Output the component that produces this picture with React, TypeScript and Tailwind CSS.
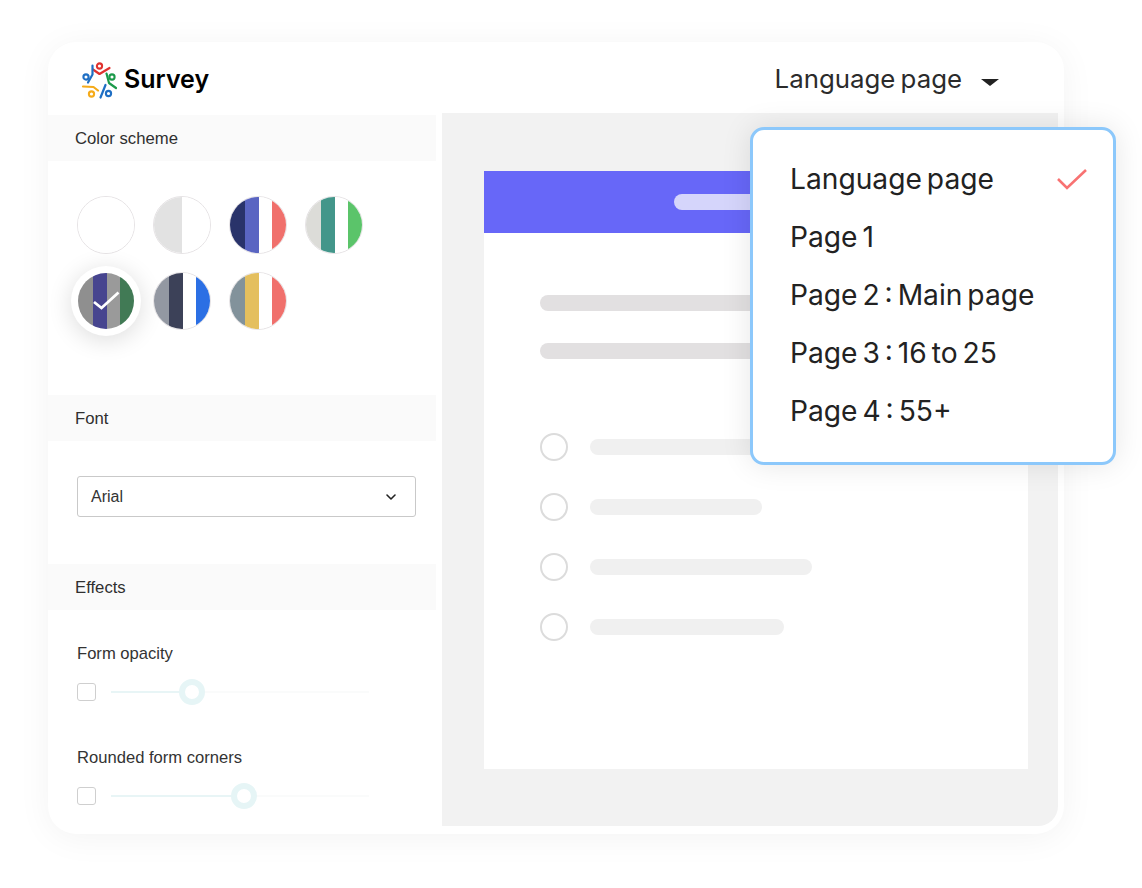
import React from 'react';
import { ChevronDown } from 'lucide-react';

const swatches: string[][] = [
  ['#ffffff'],
  ['#e2e2e2', '#ffffff'],
  ['#29336a', '#5a65c2', '#ffffff', '#f0706c'],
  ['#dcdcd8', '#43968a', '#ffffff', '#5bc46a'],
  ['#8f8f8f', '#47458f', '#9a9a9a', '#417a55'],
  ['#9398a2', '#3c4158', '#ffffff', '#2b6fe4'],
  ['#82929b', '#e4bf5e', '#ffffff', '#f0706c'],
];

const pages = ['Language page', 'Page 1', 'Page 2 : Main page', 'Page 3 : 16 to 25', 'Page 4 : 55+'];

const SurveyLogo = () => (
  <svg width="38" height="38" viewBox="0 0 38 38" fill="none" strokeLinecap="round" strokeLinejoin="round">
    <circle cx="19.5" cy="5" r="2.6" stroke="#e0322f" strokeWidth="2.1" />
    <path d="M13 8.5 L19.5 13 L29.5 7" stroke="#e0322f" strokeWidth="2.2" />
    <circle cx="6" cy="16" r="2.6" stroke="#1f6fc4" strokeWidth="2.1" />
    <path d="M12.5 4.5 L12.5 13.5 L8 21.5" stroke="#1f6fc4" strokeWidth="2.2" />
    <circle cx="32" cy="16" r="2.6" stroke="#1c9a4a" strokeWidth="2.1" />
    <path d="M26.5 12.5 L29 22 L36 27" stroke="#1c9a4a" strokeWidth="2.2" />
    <circle cx="11.5" cy="33" r="2.6" stroke="#f5ab1b" strokeWidth="2.1" />
    <path d="M3 25.5 L13.5 26 L18 29.5" stroke="#f5ab1b" strokeWidth="2.2" />
    <circle cx="28.5" cy="32.5" r="2.6" stroke="#1f6fc4" strokeWidth="2.1" />
    <path d="M25.5 24 L20.5 36.5" stroke="#1f6fc4" strokeWidth="2.2" />
  </svg>
);

const Swatch = ({ colors, selected }: { colors: string[]; selected?: boolean }) => (
  <div
    className={
      selected
        ? 'relative -m-[6px] h-[70px] w-[70px] rounded-full bg-white p-[7px] shadow-[0_4px_24px_rgba(0,0,0,0.14)]'
        : 'relative h-[58px] w-[58px] rounded-full'
    }
  >
    <div className={`flex h-full w-full overflow-hidden rounded-full ${selected ? '' : 'border border-[#e6e3e5]'}`}>
      {colors.map((c, i) => (
        <div key={i} className={`h-full ${i === 0 && colors.length === 4 ? 'flex-[1.12]' : 'flex-1'}`} style={{ backgroundColor: c }} />
      ))}
    </div>
    {selected && (
      <svg className="absolute left-[22px] top-[25px]" width="27" height="19" viewBox="0 0 27 19" fill="none">
        <path d="M1 11 L8.5 17 L25.5 1.5" stroke="#ffffff" strokeWidth="2.8" />
      </svg>
    )}
  </div>
);

const SectionBar = ({ title }: { title: string }) => (
  <div className="flex h-[46px] items-center bg-[#fafafa] pl-[27px] pt-[2px] text-[16.7px] text-[#2f2f2f]">{title}</div>
);

const SliderRow = ({ label, fill, knob }: { label: string; fill: string; knob: string }) => (
  <div>
    <div className="text-[16.6px] leading-[18px] text-[#333]">{label}</div>
    <div className="mt-[20px] flex items-center gap-[15px]">
      <div className="h-[18px] w-[19px] rounded-[3px] border border-[#cfcfcf] bg-white" />
      <div className="relative h-[2px] w-[258px] bg-[#fafbfb]">
        <div className={`absolute left-0 top-0 h-[2px] bg-[#e8f5f6] ${fill}`} />
        <div className={`absolute top-[-12px] h-[26px] w-[26px] -translate-x-1/2 rounded-full border-[6px] border-[#e6f5f6] bg-white ${knob}`} />
      </div>
    </div>
  </div>
);

const Bar = ({ className }: { className: string }) => <div className={`rounded-full ${className}`} />;

const OptionRow = ({ width }: { width: string }) => (
  <div className="flex items-center gap-[22px]">
    <div className="h-[28px] w-[28px] rounded-full border-2 border-[#dcdcdc] bg-white" />
    <Bar className={`h-4 bg-[#f0f0f0] ${width}`} />
  </div>
);

export default function App() {
  return (
    <div className="relative h-[888px] w-[1142px] overflow-hidden bg-white pl-[48px] pt-[42px] font-['Inter',sans-serif]">
      <div className="flex h-[792px] w-[1016px] flex-col rounded-[28px] bg-white shadow-[0_4px_34px_rgba(0,0,0,0.05)]">
        {/* Header */}
        <header className="flex h-[71px] shrink-0 items-center justify-between pl-[32px] pr-[65px] pt-[4px]">
          <div className="flex items-center gap-[6px]">
            <SurveyLogo />
            <span className="mt-[1px] text-[25px] font-semibold text-black">Survey</span>
          </div>
          <div className="flex items-center gap-[19px]">
            <span className="text-[25.8px] text-[#2b2b2b] [word-spacing:-2px]">Language page</span>
            <span className="mt-[6px] h-0 w-0 border-x-[9px] border-t-[7px] border-x-transparent border-t-[#222]" />
          </div>
        </header>

        <div className="flex min-h-0 flex-1 pb-[8px] pr-[6px]">
          {/* Left settings panel */}
          <aside className="w-[388px] shrink-0 pt-[2px] font-['Liberation_Sans',sans-serif]">
            <SectionBar title="Color scheme" />
            <div className="grid h-[234px] grid-cols-[repeat(4,58px)] content-start gap-x-[18px] gap-y-[18px] pl-[29px] pt-[35px]">
              {swatches.map((colors, i) => (
                <Swatch key={i} colors={colors} selected={i === 4} />
              ))}
            </div>
            <SectionBar title="Font" />
            <div className="h-[122.5px] pl-[29px] pt-[35px]">
              <div className="flex h-[41px] w-[339px] items-center justify-between rounded-[3px] border border-[#c9c9c9] pl-[13px] pr-[16px] text-[16px] text-[#333]">
                Arial
                <ChevronDown size={16} strokeWidth={2.4} className="text-[#222]" />
              </div>
            </div>
            <SectionBar title="Effects" />
            <div className="flex flex-col gap-[48px] pl-[29px] pt-[35.5px]">
              <SliderRow label="Form opacity" fill="w-[81px]" knob="left-[81px]" />
              <SliderRow label="Rounded form corners" fill="w-[133px]" knob="left-[133px]" />
            </div>
          </aside>

          {/* Form preview */}
          <main className="ml-[6px] flex-1 rounded-br-[20px] bg-[#f2f2f2] pl-[42px] pt-[58px]">
            <div className="h-[598px] w-[544px] bg-white">
              <div className="flex h-[62px] items-center bg-[#6767f8] pl-[190px]">
                <Bar className="h-4 w-[120px] bg-[#d5d5fb]" />
              </div>
              <div className="pl-[56px] pt-[62px]">
                <Bar className="h-4 w-[400px] bg-[#e2e0e1]" />
                <Bar className="mt-[32px] h-4 w-[400px] bg-[#e2e0e1]" />
                <div className="mt-[74px] flex flex-col gap-[32px]">
                  <OptionRow width="w-[300px]" />
                  <OptionRow width="w-[172px]" />
                  <OptionRow width="w-[222px]" />
                  <OptionRow width="w-[194px]" />
                </div>
              </div>
            </div>
          </main>
        </div>
      </div>

      {/* Page dropdown */}
      <div className="absolute left-[750px] top-[127px] h-[338px] w-[366px] rounded-[14px] border-[3px] border-[#8cc8fb] bg-white pl-[37px] pt-[20px] shadow-[0_0_30px_rgba(0,0,0,0.1)]">
        {pages.map((p) => (
          <div key={p} className="h-[58px] text-[28.2px] leading-[58px] text-[#222] [word-spacing:-3px]">
            {p}
          </div>
        ))}
        <svg className="absolute left-[303px] top-[38px]" width="32" height="24" viewBox="0 0 32 24" fill="none">
          <path d="M2 11 L11 20 L30 2" stroke="#f87272" strokeWidth="2.6" />
        </svg>
      </div>
    </div>
  );
}
